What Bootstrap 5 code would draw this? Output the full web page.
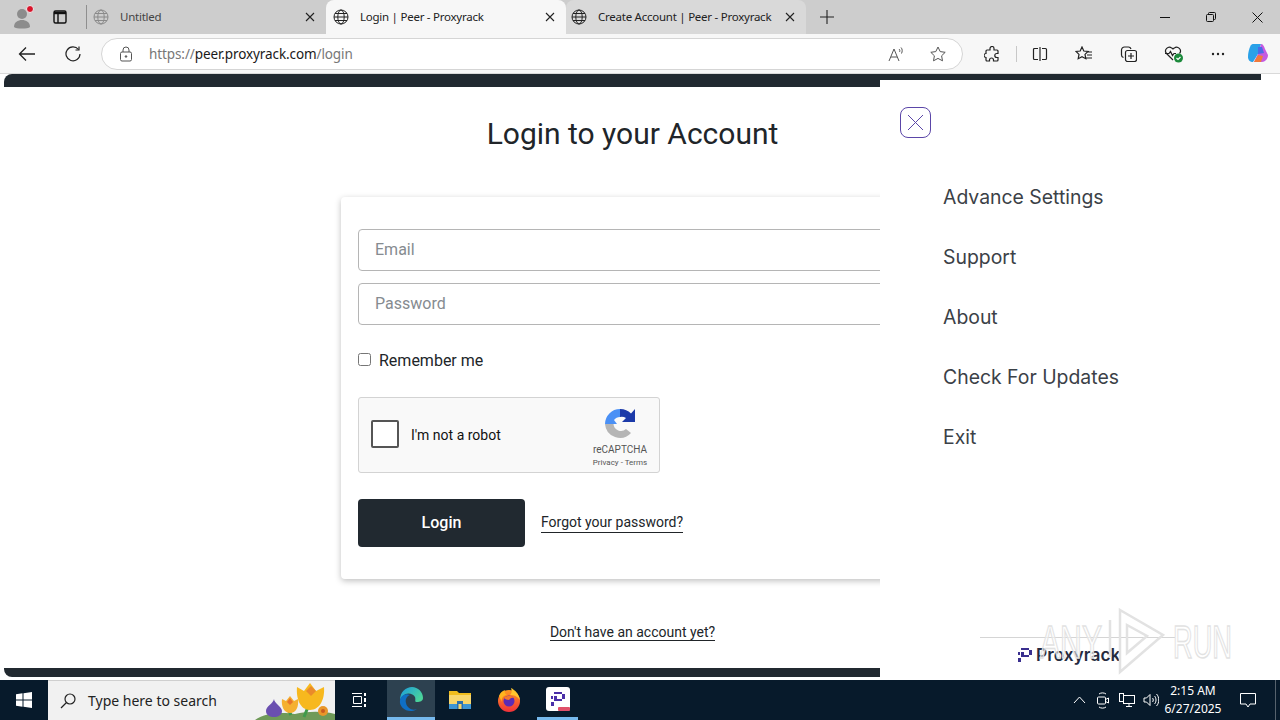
<!DOCTYPE html>
<html lang="en">

<head>
    <meta charset="UTF-8">
    <title>Login | Peer - Proxyrack</title>
    <link href="https://cdn.jsdelivr.net/npm/bootstrap@5.3.0/dist/css/bootstrap.min.css" rel="stylesheet">
    <style>
        html, body { height: 720px; overflow: hidden; }
        body { font-family: "Roboto", sans-serif; background: #fff; color: #212529; }
        svg { display: block; flex: none; }
        .shell { height: 720px; width: 1280px; }

        /* browser chrome */
        .tabstrip { height: 34px; background: #cdcdcd; font-family: "Noto Sans", sans-serif; font-size: 11.5px; letter-spacing: -.25px; color: #222; }
        .strip-left { width: 87px; padding-left: 10px; gap: 18px; border-right: 1px solid #8f8f8f; height: 24px; margin-top: 5px; }
        .tab-item { height: 34px; width: 240px; padding: 0 11px 0 7px; gap: 11px; }
        .tab-first { width: 239px; padding-left: 6px; }
        .tab-active { background: #f7f7f7; border-radius: 8px 8px 0 0; }
        .tab-next { background: #d9d9d9; border-radius: 8px 8px 0 0; padding-left: 5px; padding-right: 11px; }
        .tab-title { flex: 1; white-space: nowrap; overflow: hidden; }
        .tab-dim { color: #444; }
        .plus-slot { width: 42px; height: 34px; }
        .win-btns { margin-left: auto; }
        .win-btn { width: 46px; height: 34px; }

        .toolbar { height: 40px; background: #f7f7f7; border-bottom: 1px solid #d9d9d9; font-family: "Noto Sans", sans-serif; }
        .nav-slot { width: 45px; }
        .nav-first { width: 46px; margin-left: 4px; }
        .addr { width: 862px; height: 32px; margin-left: 6px; background: #fff; border: 1px solid #d5d5d5; border-radius: 16px; padding: 0 16px 0 16px; font-size: 13.5px; letter-spacing: -.1px; color: #777; }
        .addr-host { color: #1a1a1a; }
        .addr-text { margin-left: 15px; padding-top: 1px; flex: 1; }
        .read-icon { margin-right: 25px; }
        .tool-group { margin-left: 7px; }
        .tool-slot { width: 44.5px; }
        .tool-last { width: 36px; }
        .tool-sep { width: 1px; height: 16px; margin: 0 1px; background: #c8c8c8; }

        /* page */
        .viewport { height: 606px; position: relative; background: #fff; overflow: hidden; }
        .site { position: absolute; left: 4px; top: 0; width: 1257px; height: 603px; background: #fff; border-top: 13px solid #212930; border-bottom: 9px solid #212930; border-radius: 8px 0 0 8px; }
        .login-col { width: 1257px; padding-left: 337px; height: 100%; }
        .login-title { width: 583px; text-align: center; font-size: 30px; font-weight: 400; line-height: 36px; margin: 29px 0 45px; }
        .login-box { width: 582px; height: 382px; padding: 32px 17px 0; border-radius: 4px; box-shadow: 0 2px 6px rgba(0,0,0,.25); }
        .field { height: 42px; border: 1px solid #b5b5b5; border-radius: 4px; padding: 0 16px; font-size: 16px; color: #868b90; margin-bottom: 12px; }
        .remember { font-size: 16px; color: #212529; margin-top: 24px; gap: 8px; height: 24px; }
        .tick { width: 13px; height: 13px; margin-bottom: 4px; border: 1px solid #767676; border-radius: 2.5px; background: #fff; }
        .captcha { width: 302px; height: 76px; margin-top: 24px; background: #f9f9f9; border: 1px solid #d3d3d3; border-radius: 3px; position: relative; font-size: 14px; color: #111; }
        .captcha-box { width: 28px; height: 28px; border: 2px solid #555; border-radius: 2px; background: #fff; margin: 0 12px 2px; }
        .captcha-brand { position: absolute; left: 231px; width: 60px; top: 10px; text-align: center; color: #555; font-size: 10px; line-height: 12px; }
        .captcha-links { font-size: 8px; margin-top: 1px; }
        .login-row { margin-top: 26px; gap: 16px; }
        .login-btn { width: 167px; height: 48px; border-radius: 4px; background: #212930; color: #fff; font-weight: 500; font-size: 16px; border: 0; }
        .line-link { color: #212529; text-decoration: none; border-bottom: 1px solid #212529; font-size: 14px; line-height: 20px; }
        .login-row .line-link { margin-bottom: 2px; }
        .signup { width: 583px; text-align: center; margin-top: 41px; }

        /* side menu */
        .side-panel { position: absolute; left: 880px; top: 6px; width: 381px; height: 600px; background: #fff; }
        .close-x { position: absolute; left: 20px; top: 27px; width: 31px; height: 31px; border: 1px solid #5b46a8; border-radius: 8px; }
        .menu-list { position: absolute; left: 63px; top: 104px; font-family: "Inter", sans-serif; }
        .menu-list div { height: 60px; font-size: 19.4px; line-height: 26px; color: #3b4147; }
        .side-rule { position: absolute; left: 100px; top: 557px; width: 195px; height: 1px; background: #d5d5d5; }
        .side-logo { position: absolute; left: 138px; top: 564px; gap: 4px; font-family: "Inter", sans-serif; font-size: 17.3px; font-weight: 600; color: #262b40; line-height: 22px; }

        /* watermark */
        .stamp { position: absolute; left: 1035px; top: 531px; overflow: visible; font-family: "Liberation Sans", sans-serif; font-size: 46px; }

        /* taskbar */
        .taskbar { height: 40px; background: #071a2b; color: #fff; font-family: "Noto Sans", sans-serif; }
        .start-slot { width: 48px; }
        .search-box { width: 287px; height: 40px; background: #f1f1f1; color: #222; font-size: 14px; padding-left: 12px; gap: 12px; position: relative; overflow: hidden; border-top: 1px solid #cfcfcf; }
        .bloom { position: absolute; right: 0; top: 0; }
        .task-slot { width: 49px; height: 40px; }
        .task-view { width: 48px; margin-right: 4px; }
        .task-on { width: 48px; background: #2d4150; border-bottom: 3px solid #76b9ed; }
        .task-run { width: 41px; margin: 0 4px; border-bottom: 3px solid #76b9ed; }
        .tray { margin-left: auto; font-size: 12px; }
        .tray-slot { width: 24px; }
        .clock { width: 62px; margin: 0 4px 0 -1px; text-align: center; line-height: 18px; }
        .notify { width: 40px; margin-right: 7px; }
        .show-desk { width: 5px; height: 40px; border-left: 1px solid #56626d; }
    </style>
</head>

<body>
    <div class="shell d-flex flex-column">
        <!-- tab strip -->
        <div class="tabstrip d-flex align-items-start">
            <div class="strip-left d-flex align-items-center">
                <svg width="24" height="24" viewBox="0 0 24 24">
                    <circle cx="12" cy="9" r="5" fill="#8c8c8c"/>
                    <path d="M4 22c0-5 4-7 8-7s8 2 8 7c-2 2-14 2-16 0z" fill="#8c8c8c"/>
                    <circle cx="20" cy="4" r="3.5" fill="#d9132a" stroke="#eee"/>
                </svg>
                <svg width="16" height="16" viewBox="0 0 16 16" fill="none" stroke="#111" stroke-width="1.4">
                    <rect x="2" y="2" width="12" height="12" rx="1.5"/>
                    <path d="M2 4h12" stroke-width="2.4"/>
                    <path d="M6 4v10"/>
                </svg>
            </div>
            <div class="tab-item tab-first d-flex align-items-center">
                <svg width="16" height="16" viewBox="0 0 16 16" fill="none" stroke="#8a8a8a"><circle cx="8" cy="8" r="7"/><ellipse cx="8" cy="8" rx="3.2" ry="7"/><path d="M1 8h14M2 4.5h12M2 11.5h12"/></svg>
                <span class="tab-title tab-dim">Untitled</span>
                <svg width="10" height="10" viewBox="0 0 10 10" stroke="#222" stroke-width="1.1"><path d="M1 1l8 8M9 1l-8 8"/></svg>
            </div>
            <div class="tab-item tab-active d-flex align-items-center">
                <svg width="16" height="16" viewBox="0 0 16 16" fill="none" stroke="#222"><circle cx="8" cy="8" r="7"/><ellipse cx="8" cy="8" rx="3.2" ry="7"/><path d="M1 8h14M2 4.5h12M2 11.5h12"/></svg>
                <span class="tab-title">Login | Peer - Proxyrack</span>
                <svg width="10" height="10" viewBox="0 0 10 10" stroke="#222" stroke-width="1.1"><path d="M1 1l8 8M9 1l-8 8"/></svg>
            </div>
            <div class="tab-item tab-next d-flex align-items-center">
                <svg width="16" height="16" viewBox="0 0 16 16" fill="none" stroke="#222"><circle cx="8" cy="8" r="7"/><ellipse cx="8" cy="8" rx="3.2" ry="7"/><path d="M1 8h14M2 4.5h12M2 11.5h12"/></svg>
                <span class="tab-title">Create Account | Peer - Proxyrack</span>
                <svg width="10" height="10" viewBox="0 0 10 10" stroke="#222" stroke-width="1.1"><path d="M1 1l8 8M9 1l-8 8"/></svg>
            </div>
            <div class="plus-slot d-flex align-items-center justify-content-center">
                <svg width="14" height="14" viewBox="0 0 14 14" stroke="#222" stroke-width="1.1"><path d="M7 0v14M0 7h14"/></svg>
            </div>
            <div class="win-btns d-flex">
                <div class="win-btn d-flex align-items-center justify-content-center"><svg width="10" height="10" viewBox="0 0 10 10" stroke="#111"><path d="M0 5.5h10"/></svg></div>
                <div class="win-btn d-flex align-items-center justify-content-center"><svg width="10" height="10" viewBox="0 0 10 10" fill="none" stroke="#111"><rect x=".5" y="2.5" width="7" height="7" rx="1"/><path d="M2.5 2.5V1.5a1 1 0 0 1 1-1h5a1 1 0 0 1 1 1v5a1 1 0 0 1-1 1h-1"/></svg></div>
                <div class="win-btn d-flex align-items-center justify-content-center"><svg width="11" height="11" viewBox="0 0 11 11" stroke="#111"><path d="M.5.5l10 10M10.5.5l-10 10"/></svg></div>
            </div>
        </div>

        <!-- toolbar -->
        <div class="toolbar d-flex align-items-center">
            <div class="nav-first d-flex justify-content-center"><svg width="18" height="16" viewBox="0 0 18 16" fill="none" stroke="#222" stroke-width="1.3"><path d="M17 8H1.5M8 1.5L1.5 8 8 14.5"/></svg></div>
            <div class="nav-slot d-flex justify-content-center"><svg width="16" height="16" viewBox="0 0 16 16" fill="none" stroke="#222" stroke-width="1.2"><path d="M13.5 3.5A7 7 0 1 0 15 8"/><path d="M14 .5v3.5h-3.5"/></svg></div>
            <div class="addr d-flex align-items-center">
                <svg width="16" height="16" viewBox="0 0 16 16" fill="none" stroke="#555"><rect x="2.5" y="6" width="11" height="9" rx="1.5"/><path d="M5 6V4a3 3 0 0 1 6 0v2"/><circle cx="8" cy="10.5" r=".8" fill="#555"/></svg>
                <span class="addr-text">https://<span class="addr-host">peer.proxyrack.com</span>/login</span>
                <svg class="read-icon" width="17" height="16" viewBox="0 0 17 16" fill="none" stroke="#555"><path d="M1 15L6 3l5 12M3 11h6"/><path d="M11 3c1 1 1 2 .5 3M13 1.5c1.5 1.5 1.5 4 .5 6"/></svg>
                <svg width="16" height="16" viewBox="0 0 16 16" fill="none" stroke="#555"><path d="M8 1l2.2 4.6 5 .7-3.600 3.500.9 5L8 12.400 3.500 14.800l.9-5L.8 6.300l5-.7z"/></svg>
            </div>
            <div class="tool-group d-flex align-items-center">
                <div class="tool-slot d-flex justify-content-center"><svg width="16" height="16" viewBox="0 0 16 16" fill="none" stroke="#222" stroke-width="1.2"><path d="M6 2.500a2 2 0 0 1 4 0V4h3a1 1 0 0 1 1 1v2.500h-1.200a2 2 0 0 0 0 4H14V14a1 1 0 0 1-1 1H9.500v-1a2 2 0 0 0-4 0v1H3a1 1 0 0 1-1-1v-2.500a2 2 0 0 1 0-4V5a1 1 0 0 1 1-1h3z"/></svg></div>
                <div class="tool-sep"></div>
                <div class="tool-slot d-flex justify-content-center"><svg width="16" height="16" viewBox="0 0 16 16" fill="none" stroke="#222" stroke-width="1.2"><path d="M6 2.500H2.500a1 1 0 0 0-1 1v9a1 1 0 0 0 1 1H6M10 2.500h3.500a1 1 0 0 1 1 1v9a1 1 0 0 1-1 1H10M8 1v14"/></svg></div>
                <div class="tool-slot d-flex justify-content-center"><svg width="18" height="16" viewBox="0 0 18 16" fill="none" stroke="#222" stroke-width="1.2"><path d="M7 1l1.800 4 4.200.5-3 2.900.8 4.300L7 10.600l-3.800 2.100.8-4.300-3-2.900 4.200-.5zM12 6h5M12 9h5M11 12h6"/></svg></div>
                <div class="tool-slot d-flex justify-content-center"><svg width="17" height="17" viewBox="0 0 17 17" fill="none" stroke="#222" stroke-width="1.2"><rect x="5.500" y="5.500" width="11" height="11" rx="2"/><path d="M11 8v6M8 11h6M3.500 12.500C2 12 1.500 11 1.500 10V5a3 3 0 0 1 3-3h4c1 0 2 .5 2.500 2"/></svg></div>
                <div class="tool-slot d-flex justify-content-center"><svg width="19" height="18" viewBox="0 0 19 18" fill="none" stroke="#222" stroke-width="1.200"><path d="M9 15L2.500 8.500a3.800 3.800 0 0 1 5.300-5.400L9 4l1.200-.9a3.800 3.800 0 0 1 5.300 5.400"/><path d="M1 8.500h4l1.500-2 2 4 1.500-2h2"/><circle cx="14.500" cy="13" r="4.500" fill="#1c8a3c" stroke="none"/><path d="M12.500 13l1.500 1.500 2.500-2.500" stroke="#fff"/></svg></div>
                <div class="tool-slot d-flex justify-content-center"><svg width="14" height="4" viewBox="0 0 14 4" fill="#222"><circle cx="2" cy="2" r="1.200"/><circle cx="7" cy="2" r="1.200"/><circle cx="12" cy="2" r="1.200"/></svg></div>
                <div class="tool-last d-flex justify-content-center"><svg width="22" height="21" viewBox="0 0 22 21"><path d="M6 1h8l-3 10-5 8c-3 0-5-2-5-5 0-5 2-13 5-13z" fill="#2aa1e8"/><path d="M14 1c2 0 3 2 4 5l3 6c0 4-3 7-6 7H7l4-8z" fill="#c45be0"/><path d="M7 19l4-7 5 1-2 6z" fill="#f07a3a"/><path d="M11 4h4l2 6-6 1z" fill="#4a6ae8"/></svg></div>
            </div>
        </div>

        <!-- page -->
        <div class="viewport">
            <div class="site">
                <div class="login-col">
                    <h1 class="login-title">Login to your Account</h1>
                    <div class="login-box">
                        <div class="field d-flex align-items-center">Email</div>
                        <div class="field d-flex align-items-center">Password</div>
                        <div class="remember d-flex align-items-center"><span class="tick"></span><span>Remember me</span></div>
                        <div class="captcha d-flex align-items-center">
                            <span class="captcha-box"></span><span>I'm not a robot</span>
                            <div class="captcha-brand">
                                <svg class="mx-auto mb-1" width="32" height="32" viewBox="0 0 32 32">
                                    <path d="M1 16A15 15 0 0 1 16 1v8a7.500 7.500 0 0 0-6 3l3 4z" fill="#4a90f5"/>
                                    <path d="M16 1a15 15 0 0 1 11 4.500L31 1v13H18l4-4a8 8 0 0 0-6-1z" fill="#1c3aa9"/>
                                    <path d="M1 16h8.500A7.500 7.500 0 0 0 22 21l5 4A15 15 0 0 1 1 16z" fill="#b5b5b5"/>
                                </svg>
                                <div>reCAPTCHA</div>
                                <div class="captcha-links">Privacy - Terms</div>
                            </div>
                        </div>
                        <div class="login-row d-flex align-items-center">
                            <button class="login-btn" type="button">Login</button>
                            <a class="line-link" href="#">Forgot your password?</a>
                        </div>
                    </div>
                    <div class="signup"><a class="line-link" href="#">Don't have an account yet?</a></div>
                </div>
            </div>

            <!-- slide-out menu -->
            <div class="side-panel">
                <div class="close-x d-flex align-items-center justify-content-center">
                    <svg width="17" height="17" viewBox="0 0 17 17" stroke="#5b46a8"><path d="M1 1l15 15M16 1L1 16"/></svg>
                </div>
                <div class="menu-list">
                    <div>Advance Settings</div>
                    <div>Support</div>
                    <div>About</div>
                    <div>Check For Updates</div>
                    <div>Exit</div>
                </div>
                <div class="side-rule"></div>
                <div class="side-logo d-flex align-items-center">
                    <svg width="14" height="15" viewBox="0 0 14 15" fill="#3a2f8f"><path d="M3 0h8v2H3zM11 2h3v5h-3zM3 7h8v2H3zM3 4h3v3H3zM0 4h2v3H0zM0 10h3v4H0z"/></svg>
                    <span>Proxyrack</span>
                </div>
            </div>

            <!-- watermark -->
            <svg class="stamp" width="205" height="70" viewBox="0 0 205 70">
                <g fill="rgba(255,255,255,.55)" stroke="#e2e2e2" stroke-width="1.5">
                    <text x="5" y="53" textLength="62" lengthAdjust="spacingAndGlyphs">ANY</text>
                    <text x="138" y="53" textLength="59" lengthAdjust="spacingAndGlyphs">RUN</text>
                </g>
                <path d="M75 15v37M85 5l43 25-43 37zM92 20l20 11-20 17z" fill="none" stroke="#e2e2e2" stroke-width="2.500"/>
            </svg>
        </div>

        <!-- taskbar -->
        <div class="taskbar d-flex align-items-center">
            <div class="start-slot d-flex justify-content-center"><svg width="16" height="16" viewBox="0 0 16 16" fill="#fff"><path d="M0 2.200l6.500-.9v6.200H0zM7.500 1.200L16 0v7.500H7.500zM0 8.500h6.500v6.200L0 13.800zM7.500 8.500H16V16l-8.500-1.200z"/></svg></div>
            <div class="search-box d-flex align-items-center">
                <svg width="16" height="16" viewBox="0 0 16 16" fill="none" stroke="#222" stroke-width="1.200"><circle cx="10" cy="6" r="5"/><path d="M6.500 9.500L1 15"/></svg>
                <span>Type here to search</span>
                <svg class="bloom" width="80" height="39" viewBox="0 0 80 39">
                    <path d="M0 39c10-8 30-8 40-6 12-3 30-3 40 0v6z" fill="#6f9a58"/>
                    <path d="M36 34l-3-6M49 36l4-10" stroke="#3f9a4c" stroke-width="3"/>
                    <path d="M19 18c0 4 8 8 8 12 0 4-4 6-8 6s-8-2-8-6c0-5 7-7 8-12z" fill="#6a4fb0"/>
                    <path d="M27 18l4 2 4-5 4 5 4-2c1 8-2 14-8 14s-9-7-8-14z" fill="#f5b030"/>
                    <path d="M32 21l3-4 3 4-3 3z" fill="#e8742a"/>
                    <path d="M42 6l7 4 6-8 6 8 8-4c1 12-4 23-14 23s-14-12-13-23z" fill="#f7b81e"/>
                    <path d="M51 10l5-5 5 5-5 5z" fill="#ea8a2a"/>
                    <circle cx="68" cy="30" r="5" fill="#e8962a"/>
                    <circle cx="68" cy="30" r="2" fill="#c95c20"/>
                </svg>
            </div>
            <div class="task-slot task-view d-flex align-items-center justify-content-center"><svg width="16" height="16" viewBox="0 0 16 16" fill="none" stroke="#fff"><path d="M1 1.500h10M1 14.500h10M2.500 4.500h8v7h-8z"/><path d="M14 1v3M14 6v4M14 12v3" stroke-width="2"/></svg></div>
            <div class="task-slot task-on d-flex align-items-center justify-content-center">
                <svg width="24" height="24" viewBox="0 0 24 24">
                    <defs><linearGradient id="edgeTop" x1="0" y1="0" x2="1" y2=".6"><stop offset="0" stop-color="#1a9be0"/><stop offset="1" stop-color="#4bd49a"/></linearGradient></defs>
                    <path d="M1 13C1 5 7 0 13 0c6 0 11 5 11 11 0 3-3 4-6 4-3 0-1-2-2-5-2-4-9-5-12-1-2 2-3 3-3 4z" fill="url(#edgeTop)"/>
                    <path d="M1 13c1-5 6-7 10-5-3 1-5 4-4 8 1 5 6 8 11 6-3 2-5 2-6 2C5 24 0 19 1 13z" fill="#0f6fc5"/>
                </svg>
            </div>
            <div class="task-slot d-flex align-items-center justify-content-center">
                <svg width="22" height="20" viewBox="0 0 22 20"><path d="M0 1h8l2 2h12v5H0z" fill="#f0bc1c"/><rect y="5" width="22" height="9" fill="#f8d66c"/><rect y="14" width="22" height="5" fill="#3e95d4"/><rect x="8" y="11" width="6" height="8" fill="#2a6fb0"/><rect x="9.500" y="14" width="3" height="5" fill="#f8d66c"/></svg>
            </div>
            <div class="task-slot d-flex align-items-center justify-content-center">
                <svg width="24" height="24" viewBox="0 0 24 24">
                    <defs><linearGradient id="foxBody" x1="0" y1="0" x2="0" y2="1"><stop offset="0" stop-color="#ff9a1f"/><stop offset="1" stop-color="#f0303a"/></linearGradient></defs>
                    <circle cx="12" cy="13" r="11" fill="url(#foxBody)"/>
                    <path d="M14 0c4 2 8 6 9 12-3-4-6-5-10-5 2-2 2-4 1-7z" fill="#ffc62e"/>
                    <path d="M2 8c1-3 3-5 6-6-1 2 0 4 2 5-3 0-6 3-5 7z" fill="#ffb51e"/>
                    <circle cx="12" cy="13" r="5.500" fill="#5b2bb5"/>
                    <path d="M7 10c3-3 8-3 10 0-3-1-4 1-5 2-2 0-4-1-5-2z" fill="#f5792a"/>
                </svg>
            </div>
            <div class="task-slot task-run d-flex align-items-center justify-content-center">
                <svg width="24" height="24" viewBox="0 0 24 24"><rect width="24" height="24" rx="3" fill="#fff"/><path d="M8 5h8v2H8zM16 7h3v5h-3zM8 12h8v2H8zM8 9h3v3H8zM5 9h2v3H5zM5 15h3v4H5z" fill="#4a2fa8"/><rect x="12" y="20" width="12" height="4" rx="1" fill="#e0506a"/></svg>
            </div>
            <div class="tray d-flex align-items-center">
                <div class="tray-slot d-flex justify-content-center"><svg width="13" height="8" viewBox="0 0 13 8" fill="none" stroke="#fff"><path d="M1 7l5.500-6L12 7"/></svg></div>
                <div class="tray-slot d-flex justify-content-center"><svg width="14" height="18" viewBox="0 0 14 18" fill="none" stroke="#fff"><rect x="1.500" y="6" width="8" height="7" rx="1"/><path d="M9.500 8.500l3-1.500v5l-3-1.500M3 3c2-1.500 5-1.500 7 0M3 16c2 1.500 5 1.500 7 0"/></svg></div>
                <div class="tray-slot d-flex justify-content-center"><svg width="16" height="14" viewBox="0 0 16 14" fill="none" stroke="#fff"><rect x="4.500" y="2.500" width="11" height="8"/><rect x=".5" y=".5" width="4" height="8" fill="#071a2b"/><path d="M7 13.500h6M10 10.500v3"/></svg></div>
                <div class="tray-slot d-flex justify-content-center"><svg width="16" height="14" viewBox="0 0 16 14" fill="none" stroke="#fff"><path d="M1 5h2.500L7 1.500v11L3.500 9H1zM9.500 5c1 1 1 3 0 4M11.500 3c2 2 2 6 0 8M13.500 1c3 3 3 9 0 12"/></svg></div>
                <div class="clock">2:15 AM<br>6/27/2025</div>
                <div class="notify d-flex justify-content-center"><svg width="16" height="15" viewBox="0 0 16 15" fill="none" stroke="#fff"><path d="M.5.500h15v10.500H10l-2 3-2-3H.5z"/></svg></div>
                <div class="show-desk"></div>
            </div>
        </div>
    </div>

    <script src="https://cdn.jsdelivr.net/npm/bootstrap@5.3.0/dist/js/bootstrap.bundle.min.js"></script>
</body>

</html>
